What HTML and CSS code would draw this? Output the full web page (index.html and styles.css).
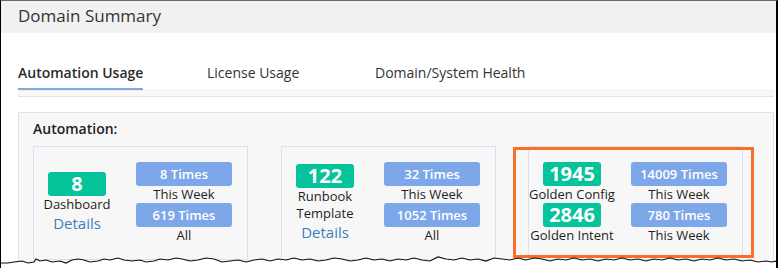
FILE: index.html
```html
<!DOCTYPE html>
<html lang="en">
<head>
    <meta charset="UTF-8">
    <title>Domain Summary</title>
    <link rel="stylesheet" href="styles.css">
</head>
<body>
    <div class="frame">
        <div class="header">Domain Summary</div>

        <div class="content">
            <div class="tabs">
                <div class="tab"><span class="tab-label active">Automation Usage</span></div>
                <div class="tab"><span class="tab-label">License Usage</span></div>
                <div class="tab"><span class="tab-label">Domain/System Health</span></div>
            </div>
            <div class="tab-strip"></div>

            <div class="panel">
                <div class="panel-title">Automation:</div>
                <div class="cards">
                    <div class="card">
                        <div class="col-left">
                            <div class="badge">8</div>
                            <div class="label">Dashboard</div>
                            <a class="details" href="#">Details</a>
                        </div>
                        <div class="col-right">
                            <div class="times">8 Times</div>
                            <div class="label">This Week</div>
                            <div class="times">619 Times</div>
                            <div class="label">All</div>
                        </div>
                    </div>

                    <div class="card">
                        <div class="col-left">
                            <div class="badge">122</div>
                            <div class="label">Runbook</div>
                            <div class="label">Template</div>
                            <a class="details" href="#">Details</a>
                        </div>
                        <div class="col-right">
                            <div class="times">32 Times</div>
                            <div class="label">This Week</div>
                            <div class="times">1052 Times</div>
                            <div class="label">All</div>
                        </div>
                    </div>

                    <div class="card">
                        <div class="col-left">
                            <div class="badge">1945</div>
                            <div class="label">Golden Config</div>
                            <div class="badge">2846</div>
                            <div class="label">Golden Intent</div>
                        </div>
                        <div class="col-right">
                            <div class="times">14009 Times</div>
                            <div class="label">This Week</div>
                            <div class="times">780 Times</div>
                            <div class="label">This Week</div>
                        </div>
                    </div>
                </div>
            </div>
        </div>

        <div class="highlight"></div>

        <svg class="torn" viewBox="0 0 779 14" width="779" height="14">
            <path fill="#fff" d="M0,9 L8,9 L14,8 L22,7 L28,9 L34,8 L36,5 L40,7 L46,6 L52,8 L60,7 L66,9 L72,6 L78,5 L84,6 L90,8 L98,7 L104,5 L110,6 L118,4 L124,6 L132,7 L140,6 L146,8 L154,7 L160,5 L168,6 L176,4 L182,5 L190,7 L198,6 L206,4 L214,5 L222,8 L230,7 L238,6 L246,8 L254,6 L262,5 L270,7 L278,5 L286,6 L294,4 L302,6 L310,5 L318,7 L326,6 L334,4 L342,5 L350,7 L358,6 L366,4 L374,6 L382,5 L390,7 L398,5 L406,6 L414,4 L422,6 L430,7 L438,3 L446,5 L454,6 L462,4 L470,6 L478,5 L486,7 L494,4 L502,5 L510,6 L518,4 L526,6 L534,4 L542,5 L550,7 L558,5 L566,6 L574,4 L582,6 L590,5 L598,7 L606,5 L614,6 L622,4 L630,6 L638,5 L646,7 L654,5 L662,6 L670,4 L678,6 L686,5 L694,7 L702,5 L710,6 L718,4 L726,6 L734,5 L742,7 L750,6 L758,8 L766,7 L772,8 L779,7 L779,14 L0,14 Z"/>
            <polyline fill="none" stroke="#111" stroke-width="1.2" points="0,9 8,9 14,8 22,7 28,9 34,8 36,5 40,7 46,6 52,8 60,7 66,9 72,6 78,5 84,6 90,8 98,7 104,5 110,6 118,4 124,6 132,7 140,6 146,8 154,7 160,5 168,6 176,4 182,5 190,7 198,6 206,4 214,5 222,8 230,7 238,6 246,8 254,6 262,5 270,7 278,5 286,6 294,4 302,6 310,5 318,7 326,6 334,4 342,5 350,7 358,6 366,4 374,6 382,5 390,7 398,5 406,6 414,4 422,6 430,7 438,3 446,5 454,6 462,4 470,6 478,5 486,7 494,4 502,5 510,6 518,4 526,6 534,4 542,5 550,7 558,5 566,6 574,4 582,6 590,5 598,7 606,5 614,6 622,4 630,6 638,5 646,7 654,5 662,6 670,4 678,6 686,5 694,7 702,5 710,6 718,4 726,6 734,5 742,7 750,6 758,8 766,7 772,8 777,7"/>
        </svg>
    </div>
</body>
</html>
```

FILE: styles.css
```css
* {
    margin: 0;
    padding: 0;
    box-sizing: border-box;
}

body {
    font-family: "Open Sans", "Liberation Sans", sans-serif;
    background: #fff;
    color: #1e1e1e;
}

.frame {
    position: relative;
    width: 778px;
    height: 268px;
    overflow: hidden;
    border-left: 1px solid #000;
    border-right: 2px solid #000;
    border-top: 1px solid #6a6a6a;
    background: #fff;
}

.header {
    height: 32px;
    background: #f1f1f1;
    color: #333;
    font-size: 17px;
    line-height: 30px;
    padding-left: 17px;
}

.content {
    padding: 0 2px 0 17px;
}

.tabs {
    display: grid;
    grid-template-columns: 189px 168px auto;
    margin-top: 28px;
}

.tab-label {
    display: inline-block;
    font-size: 14px;
    line-height: 19px;
    color: #333;
    padding-bottom: 6px;
    border-bottom: 2px solid transparent;
}

.tab-label.active {
    font-weight: 600;
    color: #2b2b2b;
    border-bottom-color: #7aaddb;
}

.tab-strip {
    height: 7px;
    background: #faf8f7;
    border-top: 1px solid #edeef0;
    border-bottom: 1px solid #dfe4ea;
}

.panel {
    margin-top: 15px;
    background: #f7f7f7;
    border: 1px solid #dbe3ee;
    padding: 6px 0 0 14px;
    height: 200px;
}

.panel-title {
    font-size: 14px;
    font-weight: 600;
    line-height: 19px;
    color: #1e1e1e;
}

.cards {
    display: flex;
    gap: 33px;
    margin-top: 8px;
}

.card {
    width: 215px;
    border: 1px solid #d6e2f5;
    background: #f7f7f7;
    padding: 15px 16px 15px 0;
    display: grid;
    grid-template-columns: 86px 96px;
    column-gap: 16px;
    align-items: center;
}

.cards .card:last-child {
    margin-left: -1px;
}

.col-left,
.col-right {
    display: flex;
    flex-direction: column;
    align-items: center;
    text-align: center;
}

.badge {
    width: 58px;
    height: 24px;
    border-radius: 3px;
    background: #05c39b;
    color: #fff;
    font-size: 20px;
    font-weight: 700;
    line-height: 24px;
}

.label {
    font-size: 13px;
    line-height: 17px;
    color: #1e1e1e;
    white-space: nowrap;
}

.details {
    font-size: 15px;
    line-height: 21px;
    color: #3b7ec1;
    text-decoration: none;
}

.times {
    width: 96px;
    height: 24px;
    border-radius: 3px;
    background: #7ea7ea;
    color: #fff;
    font-size: 13px;
    font-weight: 600;
    line-height: 24px;
}

.highlight {
    position: absolute;
    left: 512px;
    top: 146px;
    width: 241px;
    height: 111px;
    border: 3px solid #f6702a;
}

.torn {
    position: absolute;
    left: -1px;
    top: 253px;
    display: block;
}
```
